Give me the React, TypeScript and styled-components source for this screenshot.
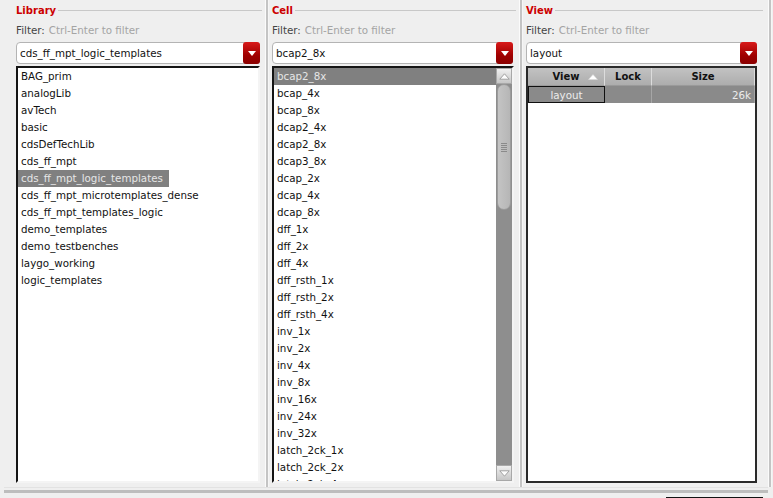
import { createGlobalStyle } from 'styled-components';
import styled from 'styled-components';

const libraries = [
  'BAG_prim',
  'analogLib',
  'avTech',
  'basic',
  'cdsDefTechLib',
  'cds_ff_mpt',
  'cds_ff_mpt_logic_templates',
  'cds_ff_mpt_microtemplates_dense',
  'cds_ff_mpt_templates_logic',
  'demo_templates',
  'demo_testbenches',
  'laygo_working',
  'logic_templates',
];

const cells = [
  'bcap2_8x',
  'bcap_4x',
  'bcap_8x',
  'dcap2_4x',
  'dcap2_8x',
  'dcap3_8x',
  'dcap_2x',
  'dcap_4x',
  'dcap_8x',
  'dff_1x',
  'dff_2x',
  'dff_4x',
  'dff_rsth_1x',
  'dff_rsth_2x',
  'dff_rsth_4x',
  'inv_1x',
  'inv_2x',
  'inv_4x',
  'inv_8x',
  'inv_16x',
  'inv_24x',
  'inv_32x',
  'latch_2ck_1x',
  'latch_2ck_2x',
  'latch_2ck_4x',
];

const GlobalStyle = createGlobalStyle`
  html, body {
    margin: 0;
    padding: 0;
    background: #efefef;
  }
  body {
    font-family: 'DejaVu Sans', 'Liberation Sans', sans-serif;
    font-size: 10.3px;
    color: #111;
  }
`;

const Root = styled.div`
  width: 773px;
  height: 498px;
  overflow: hidden;
  display: flex;
  flex-direction: column;
  background: #efefef;
`;

const Panes = styled.div`
  display: flex;
  height: 487px;
  padding-left: 4px;
`;

const Pane = styled.section<{ $width: number; $left: number; $right: number }>`
  width: ${p => p.$width}px;
  box-sizing: border-box;
  padding: 0 ${p => p.$right}px 0 ${p => p.$left}px;
  display: flex;
  flex-direction: column;
`;

const Handle = styled.div`
  width: 6px;
  flex-shrink: 0;
  background: linear-gradient(
    to right,
    #efefef 0 1px,
    #fbfbfb 1px 2px,
    #c4c4c4 2px 4px,
    #f6f6f6 4px 5px,
    #efefef 5px
  );
`;

const TitleRow = styled.div`
  height: 20px;
  display: flex;
  align-items: center;
  gap: 2px;
`;

const Title = styled.span`
  color: #cc0000;
  font-weight: bold;
  font-size: 10px;
`;

const TitleLine = styled.div`
  flex: 1;
  height: 1px;
  background: #c8c8c8;
  margin-top: 1px;
`;

const FilterRow = styled.div`
  height: 20px;
  display: flex;
  align-items: center;
  color: #444;
  gap: 4px;
`;

const Hint = styled.span`
  color: #a4a4a4;
`;

const Combo = styled.div<{ $trim: number }>`
  position: relative;
  height: 22px;
  margin: 2px ${p => p.$trim}px 2px 0;
  box-sizing: border-box;
  border: 1px solid #b4b4b4;
  border-radius: 4px;
  background: #fff;
  display: flex;
  align-items: center;
  padding-left: 3px;
  color: #111;
`;

const DropButton = styled.div`
  position: absolute;
  top: -1px;
  right: -1px;
  width: 17px;
  height: 22px;
  border-radius: 3px;
  background: linear-gradient(#d81a1a, #a00000 60%, #8a0000);
  display: flex;
  align-items: center;
  justify-content: center;
`;

const ListBox = styled.div<{ $trim: number }>`
  flex: 1;
  margin: 0 ${p => p.$trim}px 4px 0;
  box-sizing: border-box;
  border-style: solid;
  border-width: 2px;
  border-color: #141414 #f4f4f4 #f4f4f4 #141414;
  background: #fff;
  display: flex;
  overflow: hidden;
`;

const Items = styled.div`
  flex: 1;
  display: flex;
  flex-direction: column;
  overflow: hidden;
`;

const Item = styled.div<{ $selected?: boolean; $full?: boolean }>`
  height: 17px;
  line-height: 17px;
  flex-shrink: 0;
  padding: 0 6px 0 3px;
  white-space: nowrap;
  align-self: ${p => (p.$full ? 'stretch' : 'flex-start')};
  background: ${p => (p.$selected ? '#808080' : 'transparent')};
  color: ${p => (p.$selected ? '#e6e6e6' : '#111')};
`;

const ScrollBar = styled.div`
  width: 16px;
  flex-shrink: 0;
  background: #8e8e8e;
  display: flex;
  flex-direction: column;
  box-sizing: border-box;
`;

const ArrowButton = styled.div`
  height: 16px;
  flex-shrink: 0;
  background: linear-gradient(#f0f0f0, #c6c6c6);
  border: 1px solid #a8a8a8;
  box-sizing: border-box;
  display: flex;
  align-items: center;
  justify-content: center;
`;

const Thumb = styled.div`
  height: 126px;
  margin: 0 1px;
  box-sizing: border-box;
  border: 1px solid #9c9c9c;
  border-radius: 7px;
  background: linear-gradient(to right, #c4c4c4, #b6b6b6);
  display: flex;
  align-items: center;
  justify-content: center;
`;

const Track = styled.div`
  flex: 1;
`;

const Grip = styled.div`
  width: 6px;
  height: 9px;
  background: repeating-linear-gradient(#8a8a8a 0 1px, transparent 1px 2px);
`;

const TableBox = styled.div<{ $trim: number }>`
  flex: 1;
  margin: 0 ${p => p.$trim}px 4px 0;
  box-sizing: border-box;
  border: 2px solid #2a2a2a;
  background: #fff;
  display: flex;
  flex-direction: column;
`;

const Grid = styled.div`
  display: grid;
  grid-template-columns: 77px 47px 1fr;
`;

const HeadCell = styled.div`
  height: 17px;
  background: linear-gradient(#c2c2c2, #adadad);
  border-right: 1px solid #dcdcdc;
  border-bottom: 1px solid #9a9a9a;
  font-weight: bold;
  font-size: 10px;
  color: #111;
  display: flex;
  align-items: center;
  justify-content: center;
  position: relative;
`;

const SortArrow = styled.svg`
  position: absolute;
  right: 6px;
  top: 6px;
`;

const BodyCell = styled.div<{ $align: string; $focus?: boolean }>`
  height: 17px;
  box-sizing: border-box;
  background: #8a8a8a;
  color: #ececec;
  border-right: 1px solid #a6a6a6;
  border: ${p => (p.$focus ? '1px solid #101010' : undefined)};
  display: flex;
  align-items: center;
  justify-content: ${p => p.$align};
  padding: 0 3px;
`;

const Bottom = styled.div`
  flex: 1;
  margin: 0 5px 0 4px;
  border-top: 1px solid #e2e2e2;
  display: flex;
  flex-direction: column;
`;

const BottomGroove = styled.div`
  margin-top: 2px;
  height: 3px;
  background: #bdbdbd;
`;

const StatusEdge = styled.div`
  margin: auto 5px 0 auto;
  width: 97px;
  height: 1px;
  background: #111;
`;

const DownTriangle = () => (
  <svg width="8" height="5" viewBox="0 0 8 5">
    <path d="M0 0 L8 0 L4 5 Z" fill="#fff" />
  </svg>
);

const OutlineTriangle = ({ up }: { up: boolean }) => (
  <svg width="11" height="7" viewBox="0 0 11 7">
    <path
      d={up ? 'M5.5 0.8 L10.2 6.2 L0.8 6.2 Z' : 'M0.8 0.8 L10.2 0.8 L5.5 6.2 Z'}
      fill="#fdfdfd"
      stroke="#9a9a9a"
      strokeWidth="0.9"
    />
  </svg>
);

const Header = ({ title }: { title: string }) => (
  <TitleRow>
    <Title>{title}</Title>
    <TitleLine />
  </TitleRow>
);

const Filter = () => (
  <FilterRow>
    Filter:<Hint>Ctrl-Enter to filter</Hint>
  </FilterRow>
);

const ComboBox = ({ value, trim }: { value: string; trim: number }) => (
  <Combo $trim={trim}>
    {value}
    <DropButton>
      <DownTriangle />
    </DropButton>
  </Combo>
);

export default function App() {
  return (
    <Root>
      <GlobalStyle />
      <Panes>
        <Pane $width={260} $left={12} $right={2}>
          <Header title="Library" />
          <Filter />
          <ComboBox value="cds_ff_mpt_logic_templates" trim={2} />
          <ListBox $trim={2}>
            <Items>
              {libraries.map(name => (
                <Item key={name} $selected={name === 'cds_ff_mpt_logic_templates'}>
                  {name}
                </Item>
              ))}
            </Items>
          </ListBox>
        </Pane>
        <Handle />
        <Pane $width={248} $left={2} $right={2}>
          <Header title="Cell" />
          <Filter />
          <ComboBox value="bcap2_8x" trim={3} />
          <ListBox $trim={2}>
            <Items>
              {cells.map(name => (
                <Item key={name} $full $selected={name === 'bcap2_8x'}>
                  {name}
                </Item>
              ))}
            </Items>
            <ScrollBar>
              <ArrowButton>
                <OutlineTriangle up />
              </ArrowButton>
              <Thumb>
                <Grip />
              </Thumb>
              <Track />
              <ArrowButton>
                <OutlineTriangle up={false} />
              </ArrowButton>
            </ScrollBar>
          </ListBox>
        </Pane>
        <Handle />
        <Pane $width={243} $left={2} $right={4}>
          <Header title="View" />
          <Filter />
          <ComboBox value="layout" trim={6} />
          <TableBox $trim={6}>
            <Grid>
              <HeadCell>
                View
                <SortArrow width="10" height="6" viewBox="0 0 10 6">
                  <path d="M5 0.5 L9.5 5.5 L0.5 5.5 Z" fill="#fff" stroke="#d8d8d8" strokeWidth="0.6" />
                </SortArrow>
              </HeadCell>
              <HeadCell>Lock</HeadCell>
              <HeadCell>Size</HeadCell>
              <BodyCell $align="center" $focus>
                layout
              </BodyCell>
              <BodyCell $align="center" />
              <BodyCell $align="flex-end">26k</BodyCell>
            </Grid>
          </TableBox>
        </Pane>
        <Handle />
      </Panes>
      <Bottom>
        <BottomGroove />
        <StatusEdge />
      </Bottom>
    </Root>
  );
}
